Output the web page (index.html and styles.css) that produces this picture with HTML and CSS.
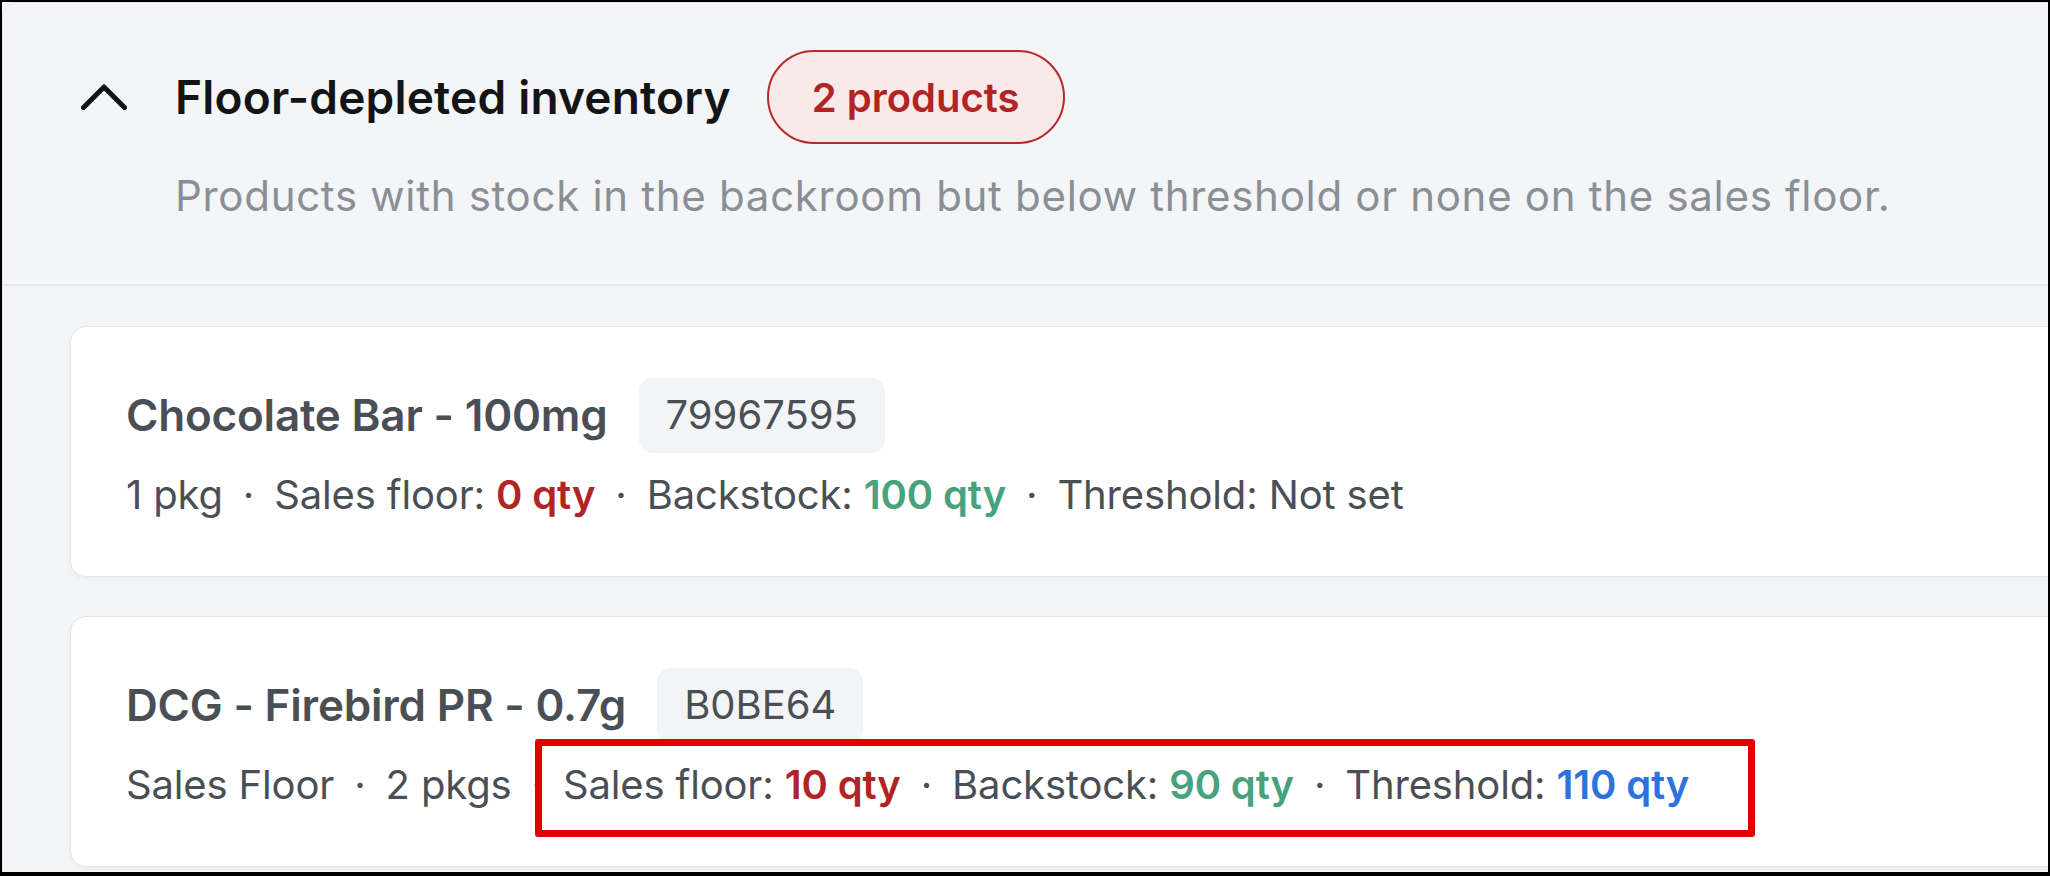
FILE: index.html
```html
<!DOCTYPE html>
<html lang="en">
<head>
  <meta charset="UTF-8">
  <meta name="viewport" content="width=device-width, initial-scale=1.0">
  <title>Floor-depleted inventory</title>
  <link rel="stylesheet" href="styles.css">
</head>
<body>
  <div class="frame">
    <section class="panel">
      <div class="panel-header">
        <div class="title-row">
          <button class="toggle" aria-label="Collapse">
            <svg width="46" height="26" viewBox="0 0 46 26"><polyline points="2.5,23.5 23,3 43.5,23.5" fill="none" stroke="#121416" stroke-width="5" stroke-linecap="round" stroke-linejoin="round"/></svg>
          </button>
          <h2>Floor-depleted inventory</h2>
          <span class="count-badge">2 products</span>
        </div>
        <p class="subtitle">Products with stock in the backroom but below threshold or none on the sales floor.</p>
      </div>

      <div class="product-list">
        <div class="product-card">
          <div class="product-head">
            <h3>Chocolate Bar - 100mg</h3>
            <span class="sku">79967595</span>
          </div>
          <div class="meta">
            <span>1 pkg</span>
            <span class="sep">·</span>
            <span>Sales floor: <b class="red">0 qty</b></span>
            <span class="sep">·</span>
            <span>Backstock: <b class="green">100 qty</b></span>
            <span class="sep">·</span>
            <span>Threshold: Not set</span>
          </div>
        </div>

        <div class="product-card">
          <div class="product-head">
            <h3>DCG - Firebird PR - 0.7g</h3>
            <span class="sku">B0BE64</span>
          </div>
          <div class="meta">
            <span>Sales Floor</span>
            <span class="sep">·</span>
            <span>2 pkgs</span>
            <span class="highlight">
              <span class="sep">·</span>
              <span>Sales floor: <b class="red">10 qty</b></span>
              <span class="sep">·</span>
              <span>Backstock: <b class="green">90 qty</b></span>
              <span class="sep">·</span>
              <span>Threshold: <b class="blue">110 qty</b></span>
            </span>
          </div>
        </div>
      </div>
    </section>
  </div>
</body>
</html>
```

FILE: styles.css
```css
html {
  overflow: hidden;
}
body {
  margin: 0;
  padding: 0;
  font-family: Inter, "Noto Sans", sans-serif;
  background-color: #000;
}
.frame {
  height: 876px;
  box-sizing: border-box;
  border: 2px solid #000;
  border-bottom-width: 4px;
  overflow: hidden;
  background-color: #f4f5f7;
}
.panel {
  width: 2200px;
  min-height: 100%;
  background-color: #f4f5f7;
  border: 1px solid #e5e7eb;
  border-radius: 14px 0 0 0;
}
.panel-header {
  padding: 47px 40px 57px 78px;
  border-bottom: 2px solid #e5e7eb;
}
.title-row {
  display: flex;
  align-items: center;
  height: 94px;
}
.toggle {
  border: none;
  background: none;
  padding: 0;
  margin-right: 48px;
  display: flex;
  cursor: pointer;
}
.title-row h2 {
  margin: 0 36px 0 0;
  font-size: 46px;
  font-weight: 600;
  color: #121416;
  letter-spacing: 0.2px;
}
.count-badge {
  height: 94px;
  box-sizing: border-box;
  padding: 0 43px;
  display: flex;
  align-items: center;
  border: 2px solid #b72a2a;
  border-radius: 47px;
  background-color: #f9e9e9;
  color: #b22424;
  font-size: 40px;
  font-weight: 600;
}
.subtitle {
  margin: 21px 0 0 94px;
  font-size: 42px;
  line-height: 61.5px;
  letter-spacing: 0.7px;
  color: #8a8f96;
}
.product-list {
  display: flex;
  flex-direction: column;
  gap: 39px;
  padding: 40px 40px 0 67px;
}
.product-card {
  background-color: #fff;
  border: 1px solid #e5e7eb;
  border-radius: 16px;
  padding: 51px 55px;
  box-shadow: 0 2px 5px rgba(0, 0, 0, 0.04);
}
.product-head {
  display: flex;
  align-items: center;
  gap: 31px;
}
.product-head h3 {
  margin: 0;
  font-size: 44px;
  font-weight: 600;
  color: #4a4f56;
  letter-spacing: -0.2px;
}
.sku {
  height: 75px;
  line-height: 73px;
  padding: 0 27px;
  border-radius: 14px;
  background-color: #f3f4f6;
  color: #4a4f56;
  font-size: 40px;
}
.meta {
  display: flex;
  align-items: center;
  gap: 20px;
  margin-top: 12px;
  font-size: 40px;
  line-height: 60px;
  letter-spacing: -0.15px;
  color: #4a4f56;
}
.meta b {
  font-weight: 600;
}
.red {
  color: #b22424;
}
.green {
  color: #48a27d;
}
.blue {
  color: #2f71de;
}
.highlight {
  position: relative;
  display: flex;
  align-items: center;
  gap: 20px;
}
.highlight::after {
  content: "";
  position: absolute;
  top: -16px;
  bottom: -22px;
  left: 3px;
  right: -66px;
  border: 7px solid #e30000;
  border-radius: 3px;
}
```
